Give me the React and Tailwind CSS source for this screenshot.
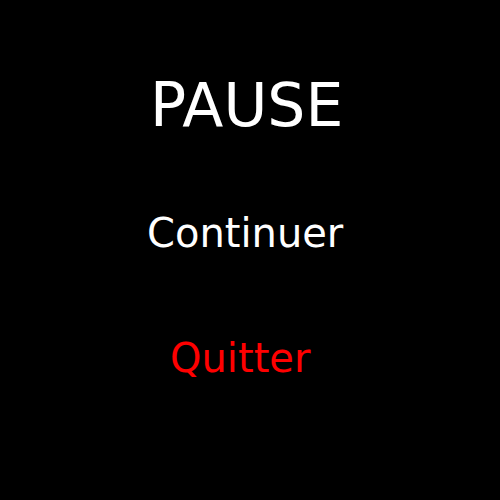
export default function App() {
  return (
    <div className="h-[500px] w-[500px] bg-black pt-[75px] text-white" style={{ fontFamily: '"DejaVu Sans", sans-serif' }}>
      <div className="pl-[150px] text-[60px] leading-none">PAUSE</div>
      <div className="mt-[78px] pl-[147px] text-[40px] leading-none">Continuer</div>
      <div className="mt-[85px] pl-[170px] text-[40px] leading-none text-[#ff0000]">Quitter</div>
    </div>
  );
}
